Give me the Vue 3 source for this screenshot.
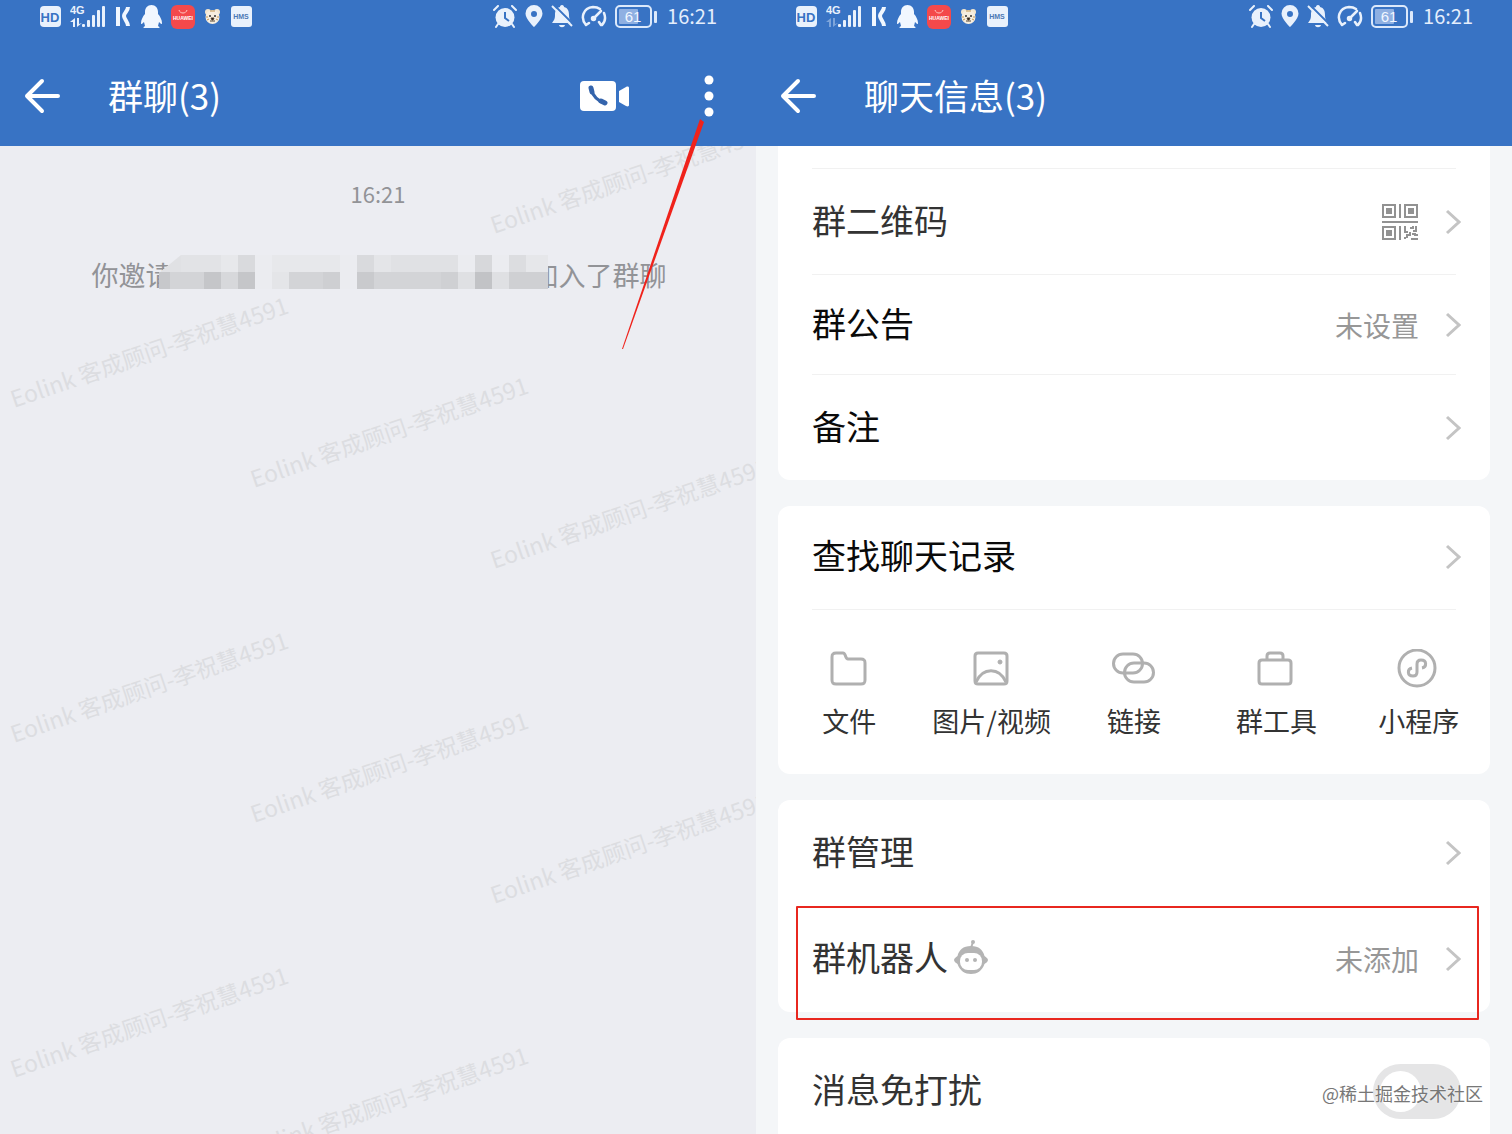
<template>
  <div class="page">
    <section v-for="panel in panels" :key="panel.id" class="panel" :class="panel.id">
      <header class="top">
        <div class="status">
          <div class="status-group left">
            <svg width="21" height="22" viewBox="0 0 21 22">
              <rect width="21" height="21" rx="4" fill="#e9f1fc" />
              <text x="10" y="16" text-anchor="middle" class="svg-text" font-size="13" font-weight="700" fill="#3873c4">HD</text>
            </svg>
            <svg width="36" height="26" viewBox="0 0 36 26" fill="#e9f1fc">
              <text x="0" y="10" class="svg-text" font-size="11" font-weight="700">4G</text>
              <g :opacity="panel.id === 'info' ? 0.4 : 1">
                <path d="M0 18l5-4v9H3v-5zM7 14h2v6l3-1-5 4z" />
              </g>
              <rect x="12" y="20" width="3" height="3" rx="1" />
              <rect x="17" y="16" width="3" height="7" rx="1" />
              <rect x="22" y="11" width="3" height="12" rx="1" />
              <rect x="27" y="6" width="3" height="17" rx="1" />
              <rect x="32" y="2" width="3" height="21" rx="1" />
            </svg>
            <svg width="17" height="22" viewBox="0 0 17 22" fill="none" stroke="#f1f7ff" stroke-width="4">
              <path d="M3 1v19" />
              <path d="M13 1c0 4-4 6-4 9s4 6 4 10" stroke-linejoin="round" />
            </svg>
            <svg width="21" height="24" viewBox="0 0 21 24" fill="#f1f7ff">
              <path d="M10.500 0C6.500 0 4 3 4 7v2c-2 2-4 6-4 9 0 2 1 1 3-1l1 4c-1 .5-1.500 1-1.500 2h16c0-1-.5-1.500-1.500-2l1-4c2 2 3 3 3 1 0-3-2-7-4-9V7c0-4-2.500-7-6.500-7z" />
            </svg>
            <svg width="24" height="24" viewBox="0 0 24 24">
              <rect width="24" height="24" rx="6" fill="#f4494b" />
              <path d="M8 5c1 4 7 4 8 0" fill="none" stroke="#ffc9c5" stroke-width="1" />
              <text x="12" y="15" text-anchor="middle" class="svg-text" font-size="5" font-weight="700" fill="#fff">HUAWEI</text>
            </svg>
            <svg width="17" height="16" viewBox="0 0 17 16">
              <circle cx="4" cy="3" r="3" fill="#f3e6cf" />
              <circle cx="13" cy="3" r="3" fill="#f3e6cf" />
              <ellipse cx="8.500" cy="8" rx="7" ry="7" fill="#f7eedf" />
              <path d="M6 2h5M2 8h2M13 8h2M3 11l2-1M14 11l-2-1" stroke="#c79850" stroke-width="1" />
              <circle cx="6" cy="7" r="1" fill="#333" />
              <circle cx="11" cy="7" r="1" fill="#333" />
              <path d="M7 9h3l-1 2h-1zM6 12h5" stroke="#554433" stroke-width="1" />
            </svg>
            <svg width="22" height="22" viewBox="0 0 22 22">
              <rect x="1" width="21" height="21" rx="3" fill="#e9f1fc" />
              <text x="11" y="13" text-anchor="middle" class="svg-text" font-size="7" font-weight="700" fill="#4b78b5">HMS</text>
            </svg>
          </div>
          <div class="status-group right">
            <svg width="24" height="24" viewBox="0 0 24 24">
              <circle cx="12" cy="12.500" r="9.500" fill="#e9f1fc" />
              <path d="M1 5l4-4M23 5l-4-4M5 19l-2 3M19 19l2 3" stroke="#e9f1fc" stroke-width="2" stroke-linecap="round" />
              <path d="M12 7v6l4 3" fill="none" stroke="#3873c4" stroke-width="2" />
            </svg>
            <svg width="18" height="24" viewBox="0 0 18 24">
              <path d="M9 0a8.500 8.500 0 0 0-8.500 8.500C.5 14 9 22 9 22s8.500-8 8.500-13.500A8.500 8.500 0 0 0 9 0zm0 6a3 3 0 1 1 0 6 3 3 0 0 1 0-6z" fill="#e9f1fc" fill-rule="evenodd" />
            </svg>
            <svg width="22" height="24" viewBox="0 0 22 24">
              <path d="M11 0c-1.500 0-2 1-2 2-4 1-5 4-5 8 0 4-1 5-3 8h20c-2-3-3-4-3-8s-1-7-5-8c0-1-.5-2-2-2zM8 20h6c-.5 3-5.500 3-6 0z" fill="#e9f1fc" />
              <path d="M3 0l19 19" stroke="#3873c4" stroke-width="2" />
              <path d="M1 1l20 20" stroke="#e9f1fc" stroke-width="2" />
            </svg>
            <svg width="26" height="24" viewBox="0 0 26 24" fill="none" stroke="#e9f1fc" stroke-width="2.500" stroke-linecap="round">
              <path d="M5 20C-1 13 2 3 12 2c3 0 5 .5 7 2M23 8c2 5 1 9-2 12M5 20l3-2M20 20l-2-3" />
              <path d="M13 13l7-7" />
              <circle cx="12.500" cy="13.500" r="1.500" />
            </svg>
            <svg width="44" height="24" viewBox="0 0 44 24">
              <rect x="1" y="1" width="35" height="21" rx="4" fill="none" stroke="#dce9fb" stroke-width="2" />
              <rect x="4" y="4" width="19" height="15" rx="1" fill="#8fb0e2" />
              <rect x="39" y="6" width="3" height="12" rx="1" fill="#dce9fb" />
              <text x="18" y="17" text-anchor="middle" class="svg-text" font-size="15" fill="#f1f7ff">61</text>
            </svg>
            <span class="clock">16:21</span>
          </div>
        </div>
        <div class="bar">
          <button class="icon-btn" aria-label="返回">
            <svg width="38" height="36" viewBox="0 0 38 36" fill="none" stroke="#fff" stroke-width="4" stroke-linecap="round" stroke-linejoin="round">
              <path d="M18 3L3 18l15 15M3 18h31" />
            </svg>
          </button>
          <h1 class="title">{{ panel.title }}</h1>
          <div v-if="panel.id === 'chat'" class="actions">
            <button class="icon-btn" aria-label="视频通话">
              <svg width="50" height="32" viewBox="0 0 50 32">
                <rect y="1" width="36" height="30" rx="4" fill="#fff" />
                <path d="M39 11l7-4c2-1 3 0 3 1v17c0 1-1 2-3 1l-7-4z" fill="#fff" />
                <path d="M11 9c2 7 6 12 14 14" fill="none" stroke="#3464ac" stroke-width="3" />
                <path d="M11 8l1 4M21 21l4 2" fill="none" stroke="#3464ac" stroke-width="5" stroke-linecap="round" />
              </svg>
            </button>
            <button class="icon-btn" aria-label="更多">
              <svg width="20" height="42" viewBox="0 0 20 42" fill="#fff">
                <circle cx="10" cy="5" r="4.500" />
                <circle cx="10" cy="21" r="4.500" />
                <circle cx="10" cy="37" r="4.500" />
              </svg>
            </button>
          </div>
        </div>
      </header>

      <main v-if="panel.id === 'chat'" class="messages">
        <svg class="watermarks" width="100%" height="100%">
          <text
            v-for="(m, i) in marks"
            :key="i"
            :transform="`translate(${m.x} ${m.y}) rotate(-19)`"
          >Eolink 客成顾问-李祝慧4591</text>
        </svg>
        <time class="time">16:21</time>
        <p class="notice">
          <span>你邀请</span>
          <svg class="mosaic" width="390" height="36" viewBox="0 0 390 36">
            <path d="M0 34V18L22 0h367v34z" fill="#ebecf0" />
            <path d="M0 18L22 0v18z" fill="#e0e1e4" />
            <rect v-for="(c, i) in mosaic" :key="i" :x="c[0]" :y="c[1]" :width="c[2]" height="17" :fill="c[3]" />
          </svg>
          <span>加入了群聊</span>
        </p>
      </main>

      <main v-else class="settings">
        <ul class="card first">
          <li class="row">
            <span>群二维码</span>
            <span class="value">
              <svg width="38" height="38" viewBox="0 0 38 38" fill="none" stroke="#929292" stroke-width="2">
                <path d="M2 2h12v12H2zM24 2h12v12H24zM2 24h12v12H2zM19 1v14M1 19h36M19 23v14" />
                <path d="M6 6h4v4H6zM28 6h4v4h-4zM6 28h4v4H6z" fill="#929292" />
                <path d="M24 23v6h3M29 25h3v-2M35 23v5h-3M29 29v3h-3v3M31 31h3v2M30 36h7M24 34v2M36 31v2" />
              </svg>
            </span>
            <svg class="chevron" viewBox="0 0 16 28"><path d="M2 3l12 11L2 25" /></svg>
          </li>
          <li class="row slim strong">
            <span>群公告</span>
            <span class="value">未设置</span>
            <svg class="chevron" viewBox="0 0 16 28"><path d="M2 3l12 11L2 25" /></svg>
          </li>
          <li class="row strong">
            <span>备注</span>
            <svg class="chevron" viewBox="0 0 16 28"><path d="M2 3l12 11L2 25" /></svg>
          </li>
        </ul>

        <div class="card">
          <div class="row strong search">
            <span>查找聊天记录</span>
            <svg class="chevron" viewBox="0 0 16 28"><path d="M2 3l12 11L2 25" /></svg>
          </div>
          <div class="tools">
            <button v-for="tool in tools" :key="tool.name" class="tool">
              <svg width="44" height="40" viewBox="0 0 44 40">
                <path v-for="d in tool.paths" :key="d" :d="d" />
                <circle v-if="tool.dot" cx="30" cy="13" r="2" fill="#b0b0b0" stroke-width="1" />
              </svg>
              <span>{{ tool.name }}</span>
            </button>
          </div>
        </div>

        <ul class="card">
          <li class="row plain">
            <span>群管理</span>
            <svg class="chevron" viewBox="0 0 16 28"><path d="M2 3l12 11L2 25" /></svg>
          </li>
          <li class="row plain marked">
            <span>群机器人</span>
            <svg class="robot" width="34" height="36" viewBox="0 0 34 36">
              <path d="M17 9l2-6" stroke="#b4b4b4" stroke-width="2" />
              <circle cx="19" cy="3" r="2" fill="#b4b4b4" />
              <path d="M17 7c8 0 12 4 13.500 10 1 1 3.500 2 3.500 4s-2.500 3-3.500 4C28 32 23 35 17 35S6 32 3.500 25C2.500 24 0 23 0 21s2.500-3 3.500-4C5 11 9 7 17 7z" fill="#b4b4b4" />
              <rect x="6" y="14" width="22" height="17" rx="8" fill="#fff" />
              <circle cx="13" cy="21" r="2" fill="#b4b4b4" />
              <circle cx="21" cy="21" r="2" fill="#b4b4b4" />
            </svg>
            <span class="value">未添加</span>
            <svg class="chevron" viewBox="0 0 16 28"><path d="M2 3l12 11L2 25" /></svg>
          </li>
        </ul>

        <div class="card">
          <div class="row plain">
            <label for="mute">消息免打扰</label>
            <input id="mute" v-model="muted" class="switch" type="checkbox" />
          </div>
        </div>
      </main>

      <svg v-if="panel.id === 'chat'" class="pointer" width="82" height="232" viewBox="0 0 82 232">
        <path d="M78 1l4 3L1 231H0z" fill="#f0221b" />
      </svg>
    </section>
    <div class="credit">@稀土掘金技术社区</div>
  </div>
</template>

<script setup>
import { ref } from 'vue'

const panels = [
  { id: 'chat', title: '群聊(3)' },
  { id: 'info', title: '聊天信息(3)' }
]

const muted = ref(false)

// three staggered columns, repeated every 335px
const marks = []
for (let i = 0; i < 3; i++) {
  marks.push({ x: 14, y: 262 + i * 335 })
  marks.push({ x: 254, y: 342 + i * 335 })
  marks.push({ x: 494, y: 88 + i * 335 })
}

// x, y, width, colour
const mosaic = [
  [22, 0, 40, '#e2e3e6'],
  [62, 0, 17, '#e7e8eb'],
  [79, 0, 17, '#d9dadd'],
  [113, 0, 68, '#e7e8eb'],
  [198, 0, 17, '#d9dadd'],
  [215, 0, 17, '#e4e5e8'],
  [232, 0, 67, '#e0e1e4'],
  [316, 0, 17, '#d7d8db'],
  [350, 0, 17, '#dcdde0'],
  [367, 0, 22, '#e6e7ea'],
  [0, 17, 11, '#c7c8cb'],
  [11, 17, 34, '#d3d4d7'],
  [45, 17, 17, '#c5c6c9'],
  [62, 17, 17, '#d7d8db'],
  [79, 17, 17, '#c5c6c9'],
  [113, 17, 17, '#e4e5e8'],
  [130, 17, 34, '#d3d4d7'],
  [164, 17, 17, '#cecfd2'],
  [198, 17, 17, '#c9cacd'],
  [215, 17, 67, '#d3d4d7'],
  [282, 17, 17, '#cfd0d3'],
  [299, 17, 17, '#dfe0e3'],
  [316, 17, 17, '#c2c3c6'],
  [333, 17, 17, '#dfe0e3'],
  [350, 17, 39, '#cfd0d3']
]

const tools = [
  {
    name: '文件',
    paths: ['M9 4h7c3 0 2 6 5 6h13c3 0 4 1 4 4v17c0 3-1 4-4 4H9c-3 0-4-1-4-4V8c0-3 1-4 4-4z']
  },
  {
    name: '图片/视频',
    dot: true,
    paths: ['M8 4h26q3 0 3 3v25q0 3-3 3H8q-3 0-3-3V7q0-3 3-3z', 'M6 33c7-15 23-15 30 0']
  },
  {
    name: '链接',
    paths: [
      'M11 5h10a9 9 0 0 1 0 19H11a9 9 0 0 1 0-19z',
      'M22 14h10a9 9 0 0 1 0 19H22a9 9 0 0 1 0-19z'
    ]
  },
  {
    name: '群工具',
    paths: ['M8 11h26q3 0 3 3v18q0 3-3 3H8q-3 0-3-3V14q0-3 3-3z', 'M13 10V7q0-3 3-3h10q3 0 3 3v3']
  },
  {
    name: '小程序',
    paths: [
      'M20 1a18 18 0 1 1 0 36 18 18 0 0 1 0-36z',
      'M25 19c5-1 5-8-1-8-3 0-4 2-4 4v8c0 2-1 4-4 4-6 0-6-7-1-8'
    ]
  }
]
</script>

<style>
body {
  overflow: hidden;
}
</style>

<style scoped>
.page {
  position: relative;
  display: grid;
  grid-template-columns: 1fr 1fr;
  height: 100vh;
  overflow: hidden;
  font-family: 'Noto Sans CJK SC', 'Noto Sans', sans-serif;
}
.panel {
  position: relative;
  display: flex;
  flex-direction: column;
  min-width: 0;
  min-height: 0;
}
.top {
  flex: none;
  background: #3873c4;
  color: #fff;
}
.status {
  display: flex;
  justify-content: space-between;
  height: 34px;
  padding: 0 39px 12px 40px;
}
.status-group {
  display: flex;
  align-items: center;
}
.status-group.left {
  gap: 9px;
}
.status-group.right {
  gap: 8px;
}
.svg-text {
  font-family: 'Liberation Sans', sans-serif;
}
.clock {
  padding-bottom: 2px;
  color: #e4eefc;
  font-size: 20px;
  line-height: 24px;
}
.bar {
  display: flex;
  align-items: center;
  height: 100px;
  padding: 0 37px 0 24px;
}
.icon-btn {
  display: flex;
  padding: 0;
  border: 0;
  background: none;
  cursor: pointer;
}
.title {
  margin: 0 0 0 46px;
  padding-bottom: 2px;
  font-size: 35px;
  font-weight: 400;
  line-height: 48px;
}
.actions {
  display: flex;
  align-items: center;
  gap: 69px;
  margin-left: auto;
}
.messages {
  position: relative;
  flex: 1;
  min-height: 0;
  padding-top: 31px;
  overflow: hidden;
  background: #ecedf2;
  color: #929397;
  text-align: center;
}
.watermarks {
  position: absolute;
  inset: 0;
  fill: #dcdde1;
  font-size: 23px;
}
.time {
  display: block;
  font-size: 22px;
  line-height: 32px;
}
.notice {
  position: relative;
  display: flex;
  align-items: center;
  justify-content: center;
  margin: 46px 0 0;
  padding-left: 2px;
  font-size: 27px;
  line-height: 40px;
}
.mosaic {
  position: relative;
  flex: none;
  margin: 0 -17px 4px -14px;
}
.pointer {
  position: absolute;
  top: 118px;
  right: 52px;
}
.settings {
  flex: 1;
  display: flex;
  flex-direction: column;
  gap: 26px;
  min-height: 0;
  padding: 0 22px;
  overflow: hidden;
  background: #f4f6f8;
}
.card {
  flex: none;
  margin: 0;
  padding: 0;
  list-style: none;
  border-radius: 12px;
  background: #fff;
}
.card.first {
  padding-top: 22px;
  border-radius: 0 0 12px 12px;
}
.row {
  position: relative;
  display: flex;
  align-items: center;
  box-sizing: border-box;
  height: 106px;
  margin: 0 34px;
  border-top: 1px solid #f1f1f1;
  color: #333;
  font-size: 34px;
  line-height: 48px;
}
.row > span:first-child,
.row > label {
  padding-bottom: 4px;
}
.row.slim {
  height: 100px;
}
.row.plain {
  border-top: 0;
}
.row.strong {
  color: #0a0a0a;
}
.row.search {
  height: 104px;
  padding-bottom: 2px;
  border-top: 0;
  border-bottom: 1px solid #f1f1f1;
}
.value {
  display: flex;
  margin-left: auto;
  color: #979797;
  font-size: 28px;
}
.chevron {
  flex: none;
  width: 16px;
  height: 28px;
  margin: 0 -5px 0 auto;
  fill: none;
  stroke: #c4c4c4;
  stroke-width: 3px;
}
.value + .chevron {
  margin-left: 26px;
}
.robot {
  margin: 0 0 4px 6px;
}
.marked::after {
  content: '';
  position: absolute;
  inset: 0 -23px -8px -16px;
  border: 2px solid #e8271f;
  border-radius: 1px;
  pointer-events: none;
}
.tools {
  display: grid;
  grid-template-columns: repeat(5, 1fr);
  height: 164px;
}
.tool {
  display: flex;
  flex-direction: column;
  align-items: center;
  gap: 12px;
  padding: 39px 0 0;
  border: 0;
  background: none;
  color: #333;
  font-family: inherit;
  font-size: 27px;
  line-height: 40px;
  white-space: nowrap;
  cursor: pointer;
}
.tool svg {
  flex: none;
  fill: none;
  stroke: #b0b0b0;
  stroke-width: 3px;
}
.switch {
  position: relative;
  width: 88px;
  height: 55px;
  margin: 0 -5px 0 auto;
  border-radius: 28px;
  background: #e5e5e6;
  appearance: none;
}
.switch::before {
  content: '';
  position: absolute;
  top: 7px;
  left: 7px;
  width: 41px;
  height: 41px;
  border-radius: 50%;
  background: #fff;
}
.switch:checked {
  background: #3873c4;
}
.switch:checked::before {
  left: 40px;
}
.credit {
  position: absolute;
  right: 29px;
  bottom: 28px;
  color: #777;
  font-size: 18px;
  line-height: 26px;
  text-shadow: 0 0 2px #fff;
}
</style>
